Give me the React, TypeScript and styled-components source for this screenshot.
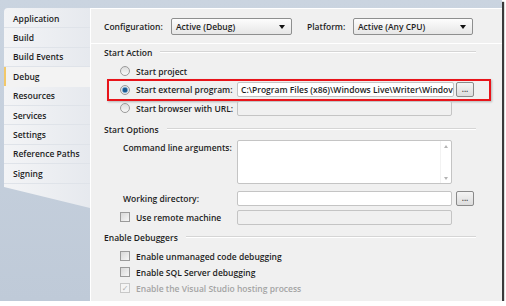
import styled, { createGlobalStyle } from 'styled-components'

const Global = createGlobalStyle`
  html, body {
    margin: 0;
    padding: 0;
    background: #fff;
  }
  * { box-sizing: border-box; }
`

const Frame = styled.div`
  width: 502px;
  height: 301px;
  display: flex;
  background: linear-gradient(#cad4e0, #bfcad8);
  box-shadow: 2px 2px 1px #3a3a3a;
  font-family: 'Open Sans', 'DejaVu Sans', sans-serif;
  font-size: 8.5px;
  font-weight: 600;
  color: #1e1e1e;
  overflow: hidden;
`

const Sidebar = styled.div`
  width: 90px;
  padding: 8px 0 0 4px;
  display: flex;
  flex-direction: column;
`

const TabList = styled.div`
  background: linear-gradient(90deg, #f3f4f6, #e6e9ee);
  border-radius: 4px 0 0 0;
  padding-top: 1px;
  height: 200px;
  clip-path: polygon(0 0, 100% 0, 100% 100%, 0 179px);
`

const Tab = styled.div<{ $active?: boolean }>`
  height: 19.4px;
  display: flex;
  align-items: center;
  padding-left: 9px;
  border-bottom: 1px solid ${p => (p.$active ? 'transparent' : '#dfe3e9')};
  background: ${p => (p.$active ? '#f3f3f3' : 'transparent')};
  box-shadow: ${p => (p.$active ? 'inset 2px 0 0 #f2c869' : 'none')};
  margin-right: ${p => (p.$active ? '-1px' : '0')};
  position: relative;
`

const Panel = styled.div`
  flex: 1;
  margin-top: 8px;
  background: #f0f0f0;
  border-left: 1px solid #fff;
  border-top: 1px solid #fff;
  display: flex;
  flex-direction: column;
`

const ConfigRow = styled.div`
  display: flex;
  align-items: center;
  height: 17px;
  margin-top: 9px;
  padding-left: 13px;
`

const ConfigLabel = styled.span<{ $w: number }>`
  width: ${p => p.$w}px;
`

const Select = styled.div<{ $w: number }>`
  width: ${p => p.$w}px;
  height: 17px;
  border: 1px solid #8e8f8f;
  border-radius: 2px;
  background: linear-gradient(#fdfdfd, #e6e6e6);
  display: flex;
  align-items: center;
  justify-content: space-between;
  padding: 0 6px 0 4px;
  margin-right: 15px;
`

const Caret = styled.span`
  width: 0;
  height: 0;
  border-left: 3.5px solid transparent;
  border-right: 3.5px solid transparent;
  border-top: 4px solid #111;
`

const HeaderRule = styled.div`
  height: 1px;
  background: #d6d6d6;
  margin-top: 8px;
  border-bottom: 1px solid #fff;
`

const Section = styled.div<{ $h: number; $mt?: number }>`
  display: flex;
  align-items: center;
  height: ${p => p.$h}px;
  margin-top: ${p => p.$mt ?? 0}px;
  padding-left: 13px;
  width: 385px;
  gap: 8px;
  &::after {
    content: '';
    flex: 1;
    height: 1px;
    background: #d5d5d5;
    border-bottom: 1px solid #fff;
  }
`

const Row = styled.div<{ $h: number; $indent: number; $mt?: number; $top?: boolean }>`
  display: flex;
  align-items: ${p => (p.$top ? 'flex-start' : 'center')};
  height: ${p => p.$h}px;
  margin-top: ${p => p.$mt ?? 0}px;
  padding-left: ${p => p.$indent}px;
  position: relative;
`

const Label = styled.span<{ $w: number; $dim?: boolean; $pt?: number }>`
  width: ${p => p.$w}px;
  padding-top: ${p => p.$pt ?? 0}px;
  color: ${p => (p.$dim ? '#a4a4a4' : 'inherit')};
  white-space: nowrap;
`

const Radio = styled.span<{ $on?: boolean }>`
  width: 10px;
  height: 10px;
  border-radius: 50%;
  border: 1px solid #9a9a9a;
  background: ${p =>
    p.$on
      ? 'radial-gradient(circle, #1d5a8e 0 2px, #6fa6d3 2.5px, #e6e6e6 3.5px)'
      : 'linear-gradient(#dcdcdc, #f8f8f8)'};
  margin-right: 6px;
  flex: none;
`

const Check = styled.span<{ $dim?: boolean }>`
  width: 10px;
  height: 10px;
  border: 1px solid ${p => (p.$dim ? '#c8c8c8' : '#9a9a9a')};
  background: ${p => (p.$dim ? '#f4f4f4' : 'linear-gradient(135deg, #d8d8d8, #f6f6f6)')};
  margin-right: 6px;
  flex: none;
  display: flex;
  align-items: center;
  justify-content: center;
  color: #b0b0b0;
  font-size: 8px;
  line-height: 1;
`

const Input = styled.div<{ $w: number; $h?: number; $disabled?: boolean }>`
  width: ${p => p.$w}px;
  height: ${p => p.$h ?? 15}px;
  border: 1px solid #c4c4c4;
  border-radius: 2px;
  background: ${p => (p.$disabled ? '#f0f0f0' : '#fff')};
  padding: 0 3px;
  display: flex;
  align-items: center;
  overflow: hidden;
  white-space: nowrap;
`

const TextArea = styled.div`
  width: 215px;
  height: 44px;
  border: 1px solid #c4c4c4;
  border-radius: 2px;
  background: #fff;
  display: flex;
  justify-content: flex-end;
`

const ScrollBar = styled.div`
  width: 11px;
  display: flex;
  flex-direction: column;
  justify-content: space-between;
  align-items: center;
  padding: 4px 0 3px;
  border-left: 1px solid #f2f2f2;
`

const Arrow = styled.span<{ $up?: boolean }>`
  width: 0;
  height: 0;
  border-left: 2.5px solid transparent;
  border-right: 2.5px solid transparent;
  ${p => (p.$up ? 'border-bottom: 3px solid #b4b4b4;' : 'border-top: 3px solid #b4b4b4;')}
`

const Browse = styled.div<{ $gap?: number }>`
  width: 18px;
  height: 15px;
  margin-left: ${p => p.$gap ?? 4}px;
  border: 1px solid #8a8a8a;
  border-radius: 2px;
  background: linear-gradient(#f4f4f4, #dcdcdc);
  display: flex;
  align-items: center;
  justify-content: center;
  padding-bottom: 3px;
  font-size: 8px;
  color: #333;
`

const Highlight = styled.div`
  position: absolute;
  left: 16px;
  top: -1px;
  width: 384px;
  height: 22px;
  border: 2px solid #e8141a;
  box-shadow: 1px 1px 2px rgba(0, 0, 0, 0.25);
  pointer-events: none;
`

const tabs = [
  'Application',
  'Build',
  'Build Events',
  'Debug',
  'Resources',
  'Services',
  'Settings',
  'Reference Paths',
  'Signing',
]

export default function App() {
  return (
    <>
      <Global />
      <Frame>
        <Sidebar>
          <TabList>
            {tabs.map(t => (
              <Tab key={t} $active={t === 'Debug'}>
                {t}
              </Tab>
            ))}
          </TabList>
        </Sidebar>
        <Panel>
          <ConfigRow>
            <ConfigLabel $w={67}>Configuration:</ConfigLabel>
            <Select $w={121}>
              Active (Debug)
              <Caret />
            </Select>
            <ConfigLabel $w={46}>Platform:</ConfigLabel>
            <Select $w={120}>
              Active (Any CPU)
              <Caret />
            </Select>
          </ConfigRow>
          <HeaderRule />
          <Section $h={14} $mt={1}>Start Action</Section>
          <Row $h={18} $indent={29} $mt={3}>
            <Radio />
            Start project
          </Row>
          <Row $h={19} $indent={29}>
            <Radio $on />
            <Label $w={101}>Start external program:</Label>
            <Input $w={217}>C:\Program Files (x86)\Windows Live\Writer\Windov</Input>
            <Browse $gap={2}>...</Browse>
            <Highlight />
          </Row>
          <Row $h={18} $indent={29}>
            <Radio />
            <Label $w={101}>Start browser with URL:</Label>
            <Input $w={215} $disabled />
          </Row>
          <Section $h={14} $mt={5}>Start Options</Section>
          <Row $h={44} $indent={32} $mt={4} $top>
            <Label $w={114} $pt={2}>Command line arguments:</Label>
            <TextArea>
              <ScrollBar>
                <Arrow $up />
                <Arrow />
              </ScrollBar>
            </TextArea>
          </Row>
          <Row $h={15} $indent={32} $mt={7}>
            <Label $w={114}>Working directory:</Label>
            <Input $w={215} />
            <Browse>...</Browse>
          </Row>
          <Row $h={16} $indent={29} $mt={3}>
            <Check />
            <Label $w={101}>Use remote machine</Label>
            <Input $w={215} $h={15} $disabled />
          </Row>
          <Section $h={14} $mt={5}>Enable Debuggers</Section>
          <Row $h={16} $indent={29} $mt={4}>
            <Check />
            Enable unmanaged code debugging
          </Row>
          <Row $h={16} $indent={29}>
            <Check />
            Enable SQL Server debugging
          </Row>
          <Row $h={16} $indent={29}>
            <Check $dim>✓</Check>
            <Label $w={300} $dim>Enable the Visual Studio hosting process</Label>
          </Row>
        </Panel>
      </Frame>
    </>
  )
}
